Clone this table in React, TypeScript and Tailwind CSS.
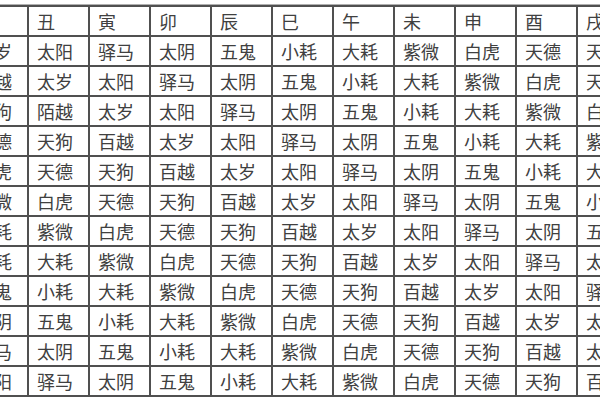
import React from 'react';

const header = ['子', '丑', '寅', '卯', '辰', '巳', '午', '未', '申', '酉', '戌'];

const cycle = ['太岁', '百越', '天狗', '天德', '白虎', '紫微', '大耗', '小耗', '五鬼', '太阴', '驿马', '太阳'];

// each row shifts the cycle by one column
const rows = cycle.map((_, r) =>
  header.map((_, c) => {
    const word = cycle[(((r - c) % 12) + 12) % 12];
    return r === 2 && c === 1 ? '陌越' : word;
  })
);

const Cell = ({ text }: { text: string }) => (
  <div className="bg-white h-[28px] flex items-center pl-[8px] text-[18px] leading-none text-[#404040] whitespace-nowrap overflow-hidden">
    {text}
  </div>
);

const App = () => {
  return (
    <div
      className="w-[600px] h-[400px] overflow-hidden bg-white"
      style={{ fontFamily: '"Noto Sans CJK SC", "Noto Sans", sans-serif' }}
    >
      <div className="pt-[4px] ml-[-34px]">
        <div className="inline-grid grid-cols-[repeat(11,59px)] gap-[2px] p-[2px] bg-[#505050] border-t border-[#b0b0b0]">
          {header.map((h, i) => (
            <Cell key={'h' + i} text={h} />
          ))}
          {rows.map((row, r) =>
            row.map((t, c) => <Cell key={r + '-' + c} text={t} />)
          )}
        </div>
      </div>
    </div>
  );
};

export default App;
